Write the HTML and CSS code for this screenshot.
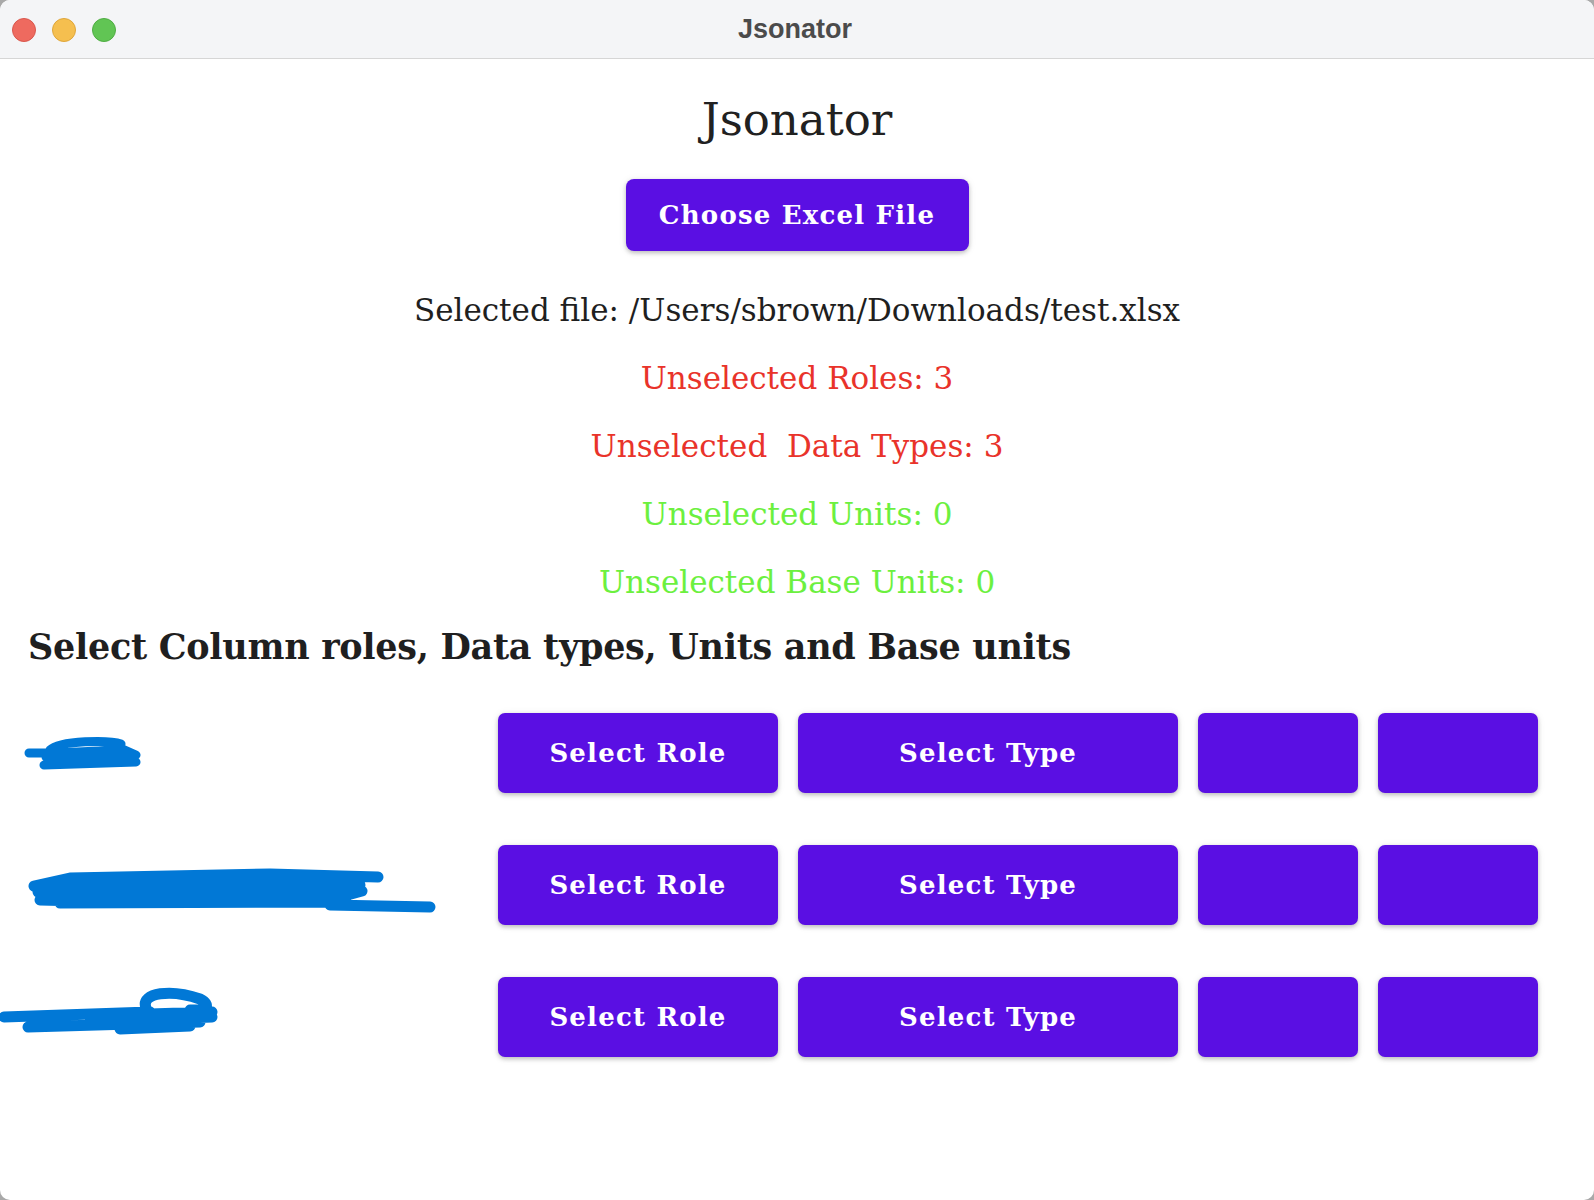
FILE: index.html
```html
<!DOCTYPE html>
<html lang="en">
<head>
<meta charset="utf-8">
<title>Jsonator</title>
<link rel="stylesheet" href="styles.css">
</head>
<body>
<div class="window">
  <header class="titlebar">
    <div class="lights">
      <span class="light red"></span>
      <span class="light yellow"></span>
      <span class="light green"></span>
    </div>
    <div class="wintitle">Jsonator</div>
  </header>
  <main class="content">
    <h1 class="apptitle">Jsonator</h1>
    <button class="btn choose">Choose Excel File</button>
    <p class="status">Selected file: /Users/sbrown/Downloads/test.xlsx</p>
    <p class="status bad">Unselected Roles: 3</p>
    <p class="status bad">Unselected&nbsp; Data Types: 3</p>
    <p class="status good">Unselected Units: 0</p>
    <p class="status good">Unselected Base Units: 0</p>
    <h2 class="section">Select Column roles, Data types, Units and Base units</h2>
    <div class="rows">
      <div class="row">
        <div class="label">
          <svg class="scribble" width="498" height="80" viewBox="0 0 498 80">
            <path d="M29 40 L92 40 M50 37 C60 27 110 27 121 31 M46 44 L134 44 M44 52 L136 49 M60 47 L130 47 M118 34 L136 42 M56 40 L120 37" />
          </svg>
        </div>
        <button class="btn cell w-role">Select Role</button>
        <button class="btn cell w-type">Select Type</button>
        <button class="btn cell w-sm"></button>
        <button class="btn cell w-sm"></button>
      </div>
      <div class="row">
        <div class="label">
          <svg class="scribble thick" width="498" height="80" viewBox="0 0 498 80">
            <path d="M34 41 L70 33 L270 29 L378 32 M38 47 L360 40 M42 53 L352 48 M60 58 L346 57 M40 55 L120 57 M330 60 L430 62 M340 52 L362 46 M60 38 L340 36" />
          </svg>
        </div>
        <button class="btn cell w-role">Select Role</button>
        <button class="btn cell w-type">Select Type</button>
        <button class="btn cell w-sm"></button>
        <button class="btn cell w-sm"></button>
      </div>
      <div class="row">
        <div class="label">
          <svg class="scribble thick" width="498" height="80" viewBox="0 0 498 80">
            <path d="M4 40 L150 35 M28 50 L200 45 M90 45 L212 40 M120 52 L190 49 M146 31 C140 15 172 12 200 22 C212 28 206 34 190 33 M150 37 L212 35" />
          </svg>
        </div>
        <button class="btn cell w-role">Select Role</button>
        <button class="btn cell w-type">Select Type</button>
        <button class="btn cell w-sm"></button>
        <button class="btn cell w-sm"></button>
      </div>
    </div>
  </main>
</div>
</body>
</html>
```
FILE: styles.css
```css
html, body {
  margin: 0;
  padding: 0;
}
body {
  background: #a9a9a9;
  width: 1594px;
  height: 1200px;
  overflow: hidden;
}
.window {
  width: 1594px;
  height: 1200px;
  background: #ffffff;
  border-radius: 10px;
  overflow: hidden;
  display: flex;
  flex-direction: column;
}
.titlebar {
  height: 58px;
  flex: none;
  background: #f4f5f7;
  border-bottom: 1px solid #d6d6d6;
  display: flex;
  align-items: center;
  justify-content: center;
  position: relative;
}
.lights {
  position: absolute;
  left: 12px;
  top: 18px;
  display: flex;
  gap: 16px;
}
.light {
  width: 24px;
  height: 24px;
  border-radius: 50%;
  box-sizing: border-box;
}
.light.red { background: #ee6a5f; border: 1px solid #d9574d; }
.light.yellow { background: #f5bf4f; border: 1px solid #dfa63a; }
.light.green { background: #61c554; border: 1px solid #4fad43; }
.wintitle {
  font-family: "Liberation Sans", Arial, sans-serif;
  font-weight: 700;
  font-size: 27px;
  color: #4b4b4b;
  margin-left: -4px;
}
.content {
  display: flex;
  flex-direction: column;
  align-items: center;
  font-family: "DejaVu Serif", serif;
  color: #1f1f1f;
}
.apptitle {
  margin: 34px 0 0;
  font-weight: 400;
  font-size: 45px;
  line-height: 54px;
  color: #212121;
}
.btn {
  border: none;
  background: #5a0fe3;
  color: #ffffff;
  font-family: "DejaVu Serif", serif;
  font-weight: 700;
  border-radius: 7px;
  box-shadow: 0 2px 4px rgba(0, 0, 0, 0.22), 0 1px 8px rgba(0, 0, 0, 0.08);
  padding: 0;
  cursor: pointer;
}
.choose {
  margin-top: 32px;
  width: 343px;
  height: 72px;
  font-size: 26px;
  letter-spacing: 1.2px;
  border-radius: 8px;
}
.status {
  margin: 28px 0 0;
  font-size: 31px;
  line-height: 40px;
  color: #1f1f1f;
}
.choose + .status {
  margin-top: 39px;
}
.status.bad { color: #e9332a; }
.status.good { color: #6cf03f; }
.section {
  align-self: stretch;
  margin: 23px 0 0 28px;
  font-size: 35px;
  line-height: 44px;
  letter-spacing: -0.3px;
  font-weight: 700;
  color: #1f1f1f;
}
.rows {
  align-self: stretch;
  margin-top: 44px;
  display: flex;
  flex-direction: column;
  gap: 52px;
}
.row {
  display: flex;
  height: 80px;
  gap: 20px;
}
.label {
  width: 478px;
  flex: none;
  position: relative;
}
.scribble {
  position: absolute;
  left: 0;
  top: 0;
  fill: none;
  stroke: #0178d6;
  stroke-width: 9;
  stroke-linecap: round;
  stroke-linejoin: round;
}
.scribble.thick {
  stroke-width: 11;
}
.cell {
  height: 80px;
  flex: none;
  font-size: 26px;
  letter-spacing: 1.2px;
}
.w-role { width: 280px; }
.w-type { width: 380px; }
.w-sm { width: 160px; }
```
